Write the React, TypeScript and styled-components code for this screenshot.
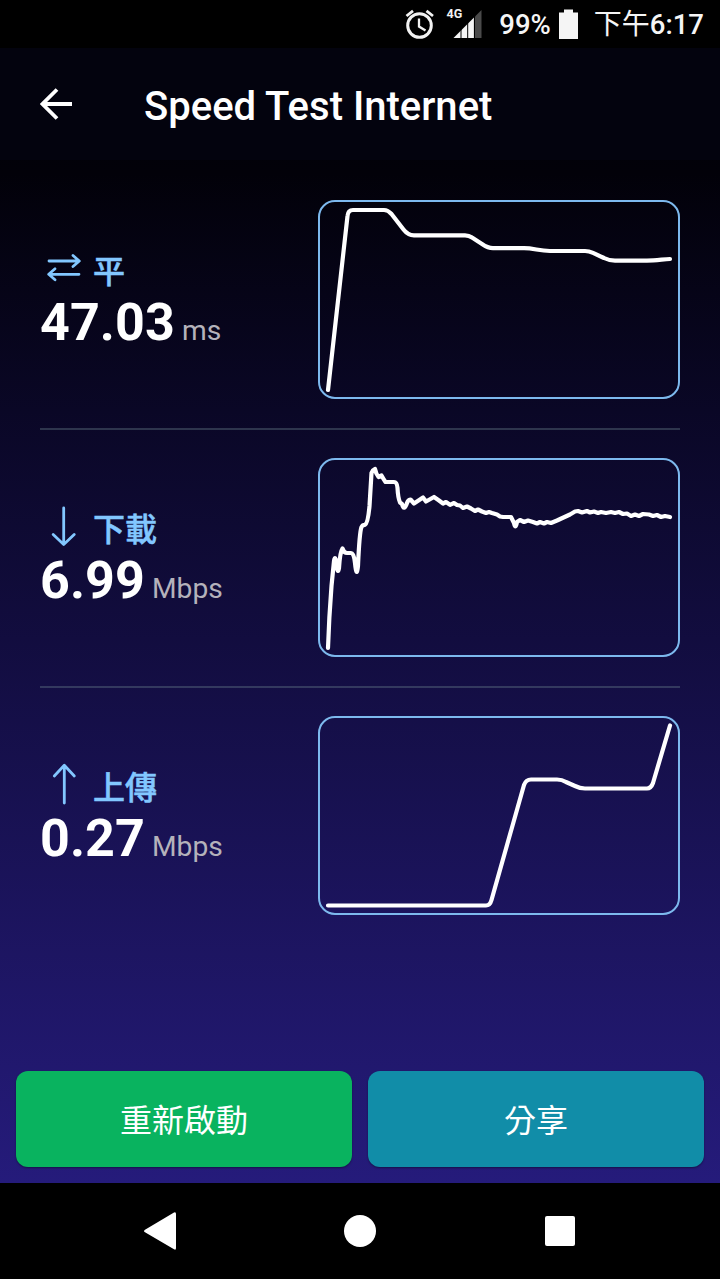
import React from "react";
import styled, { createGlobalStyle } from "styled-components";

const GlobalStyle = createGlobalStyle`
  * { box-sizing: border-box; }
  body {
    margin: 0;
    background: #000;
    font-family: Roboto, "Noto Sans CJK TC", sans-serif;
    color: #fff;
  }
`;

const Screen = styled.div`
  width: 720px;
  height: 1279px;
  display: flex;
  flex-direction: column;
  overflow: hidden;
`;

const StatusBar = styled.div`
  height: 48px;
  flex: none;
  background: #000;
  display: flex;
  justify-content: flex-end;
  align-items: center;
  padding-right: 16px;
`;

const StatusIcons = styled.svg`
  display: block;
  margin-right: 17px;
`;

const StatusText = styled.span<{ $gap?: number }>`
  font-size: 27.5px;
  font-weight: 500;
  line-height: 50px;
  height: 48px;
  white-space: nowrap;
  color: #f5f5f5;
  margin-right: ${(p) => p.$gap ?? 0}px;
`;

const ClockPrefix = styled.span`
  font-family: "Noto Sans CJK TC", sans-serif;
  font-weight: 400;
  font-size: 28px;
  line-height: 0;
`;

const BatteryIcon = styled.svg`
  display: block;
  margin-right: 16px;
`;

const AppBody = styled.div`
  flex: 1;
  display: flex;
  flex-direction: column;
  background: linear-gradient(#010105 0%, #020109 11%, #0a0726 32%, #251b7b 100%);
`;

const Header = styled.header`
  height: 112px;
  flex: none;
  display: flex;
  align-items: center;
  padding-left: 40px;
  background: #03030e;
`;

const BackIcon = styled.svg`
  display: block;
  margin-right: 72px;
`;

const Title = styled.h1`
  margin: 5px 0 0;
  font-size: 40px;
  font-weight: 500;
  line-height: 48px;
  white-space: nowrap;
`;

const Results = styled.main`
  flex: 1;
  padding: 12px 40px 0;
`;

const ResultRow = styled.section`
  display: flex;
  justify-content: space-between;
  padding: 28px 0;
  height: 258px;
  border-bottom: 2px solid rgba(105, 130, 140, 0.38);

  &:last-child {
    border-bottom: 0;
  }
`;

const Reading = styled.div`
  padding-top: 45px;
`;

const Label = styled.div`
  display: flex;
  align-items: center;
  height: 48px;
  color: #82c7ff;
  font-size: 32px;
  font-weight: 500;
  line-height: 48px;
`;

const LabelIcon = styled.svg`
  display: block;
  width: 48px;
  height: 48px;
  margin-right: 5px;
  fill: none;
  stroke: currentColor;
  stroke-width: 2.8;
  stroke-linecap: round;
  stroke-linejoin: round;
`;

const LabelText = styled.span`
  height: 48px;
  font-family: "Noto Sans CJK TC", sans-serif;
  -webkit-text-stroke: 0.5px currentColor;
`;

const Value = styled.div`
  display: flex;
  align-items: baseline;
  gap: 7px;
  margin-top: 1px;
  line-height: 57px;
  white-space: nowrap;
`;

const Amount = styled.span`
  font-size: 52px;
  font-weight: 700;
  letter-spacing: 0.1px;
`;

const Unit = styled.span`
  font-size: 28.200px;
  color: #b4b2bb;
`;

const ChartFrame = styled.div`
  width: 362px;
  height: 199px;
  border: 2px solid #7db9ee;
  border-radius: 17px;
`;

const ChartSvg = styled.svg`
  display: block;
  width: 358px;
  height: 196px;
  fill: none;
  stroke: #fff;
  stroke-width: 4.2;
  stroke-linecap: round;
  stroke-linejoin: round;
`;

const Actions = styled.div`
  display: flex;
  gap: 16px;
  padding: 0 16px 16px;
`;

const ActionButton = styled.button<{ $color: string }>`
  flex: 1;
  height: 96px;
  border: 0;
  border-radius: 12px;
  padding: 0 0 2px;
  background: ${(p) => p.$color};
  color: #fff;
  font: 400 32px/94px "Noto Sans CJK TC", sans-serif;
  box-shadow: 0 1px 2px rgba(0, 0, 0, 0.4);
`;

const NavBar = styled.nav`
  height: 96px;
  flex: none;
  background: #000;
  display: flex;
  justify-content: space-between;
  align-items: center;
  padding: 0 140px;
`;

const NavIcon = styled.svg`
  display: block;
  width: 40px;
  height: 40px;
  fill: #fff;
`;

const results = [
  {
    label: "平",
    amount: "47.03",
    unit: "ms",
    icon: "M9 16H39M33 10.500L39.300 16L33 21.500M39 29.300H9M15 23.800L8.700 29.300L15 34.800",
    chart:
      "M10 190L29.500 16Q30 10 35 10H66Q70 10 73.500 14L85.500 29.500Q90 35.300 96 35.300H147Q151 35.300 154 37.500L164 44Q170 48.200 175 48.200H206C216 48.200 221 51 232 51H267Q271 51 275 52.800L286 58Q291 60.600 297 60.600H329C338 60.600 345 59.300 352 59",
  },
  {
    label: "下載",
    amount: "6.99",
    unit: "Mbps",
    icon: "M23.700 5V41M13.200 31.500L23.700 41.500L34.200 31.500",
    chart:
      "M10 190Q11 160 13.500 128L16 103Q17 97 18.500 104Q19.500 118 21 110Q22 94 24.500 90.500Q26 95 29 95H33Q36 95 37 105Q38.500 121 40 108Q41.500 74 43.500 69Q44.500 66.800 47 66.800Q50 65 51.500 48L53.500 15Q54.500 12 57 11Q58 16 60.500 19L63.500 17.500Q66 22 67.500 24H76Q79 24 79.500 30Q80 40 82 44.500L84 46Q86 54 89 45Q90 42 92.500 41.500L96 45.500L105 39.500L108 43.500L116 39L121 42.500L125 45.500L128 44L132 46.800L136 45L139 47L142 47.500L145 50L149 48.500L153 50.500L157 53L160 51.500L164 53.500L168 55L171 54L174 55L179 56.500L182 58.500L185 59H193L196 65Q197.500 72 199 64L202 62L206 64L210 62.500L215 64L219 65.500L222 64L226 65.500L229 64L233 65L239 62.500L252 56.500L257 53.500L260 53L264 54.500L269 53L272 54.500L276 53.500L280 55L283 54L288 55L293 54L297 55L301 54L305 56L309 55.500L313 58L317 56.500L321 58L325 56L331 56.500L335 58L339 57L343 59L347 58L352 59",
  },
  {
    label: "上傳",
    amount: "0.27",
    unit: "Mbps",
    icon: "M24.300 42V5M14.300 15L24.300 4.300L34.300 15",
    chart:
      "M10 189.500H168Q172 189.500 173.500 184L206 69Q208 63.500 213 63.500H239Q244 63.500 248 66L257 70Q262 72.500 267 72.500H329Q333 72.500 335 67L352 9.500",
  },
];

export default function App() {
  return (
    <>
      <GlobalStyle />
      <Screen>
        <StatusBar>
          <StatusIcons width="77" height="40" viewBox="405 4 77 40">
            <g fill="none" stroke="#f2f2f2" strokeWidth="3">
              <circle cx="419.500" cy="25.500" r="11.800" />
              <path d="M419 18.500V26.500L425.500 30.500" strokeWidth="2.300" />
              <path d="M406.500 16L413 10.800M426.500 10.800L433 16" strokeWidth="2.800" />
            </g>
            <text x="446.500" y="18.300" fill="#f2f2f2" fontSize="12.500" fontWeight="700" fontFamily="Roboto, sans-serif">
              4G
            </text>
            <path d="M453.500 38L474 17.500V38Z" fill="#f5f5f5" />
            <path d="M475 16.500L481.500 10V38H475Z" fill="#4a4a4a" />
            <path d="M461 28V38M467.700 21V38M474.400 14V38" stroke="#000" strokeWidth="1" />
          </StatusIcons>
          <StatusText $gap={8}>99%</StatusText>
          <BatteryIcon width="19" height="30" viewBox="0 0 19 30">
            <path d="M5 0.500H14V3.500H19V30H0V3.500H5Z" fill="#f5f5f5" />
          </BatteryIcon>
          <StatusText>
            <ClockPrefix>下午</ClockPrefix>6:17
          </StatusText>
        </StatusBar>
        <AppBody>
          <Header>
            <BackIcon width="32" height="32" viewBox="0 0 32 32">
              <path d="M32 16H3M17 1.500L2.500 16L17 30.500" fill="none" stroke="#fff" strokeWidth="3.800" />
            </BackIcon>
            <Title>Speed Test Internet</Title>
          </Header>
          <Results>
            {results.map((r) => (
              <ResultRow key={r.label}>
                <Reading>
                  <Label>
                    <LabelIcon viewBox="0 0 48 48">
                      <path d={r.icon} />
                    </LabelIcon>
                    <LabelText>{r.label}</LabelText>
                  </Label>
                  <Value>
                    <Amount>{r.amount}</Amount>
                    <Unit>{r.unit}</Unit>
                  </Value>
                </Reading>
                <ChartFrame>
                  <ChartSvg viewBox="2 2 358 196">
                    <path d={r.chart} />
                  </ChartSvg>
                </ChartFrame>
              </ResultRow>
            ))}
          </Results>
          <Actions>
            <ActionButton $color="#09b35f">重新啟動</ActionButton>
            <ActionButton $color="#118da8">分享</ActionButton>
          </Actions>
        </AppBody>
        <NavBar>
          <NavIcon viewBox="0 0 40 40">
            <path d="M34 1.500Q36 0.500 36 3V37Q36 39.500 34 38.300L5 21.300Q3 20 5 18.700Z" />
          </NavIcon>
          <NavIcon viewBox="0 0 40 40">
            <circle cx="20" cy="20" r="16" />
          </NavIcon>
          <NavIcon viewBox="0 0 40 40">
            <rect x="5" y="5" width="30" height="30" rx="2" />
          </NavIcon>
        </NavBar>
      </Screen>
    </>
  );
}
